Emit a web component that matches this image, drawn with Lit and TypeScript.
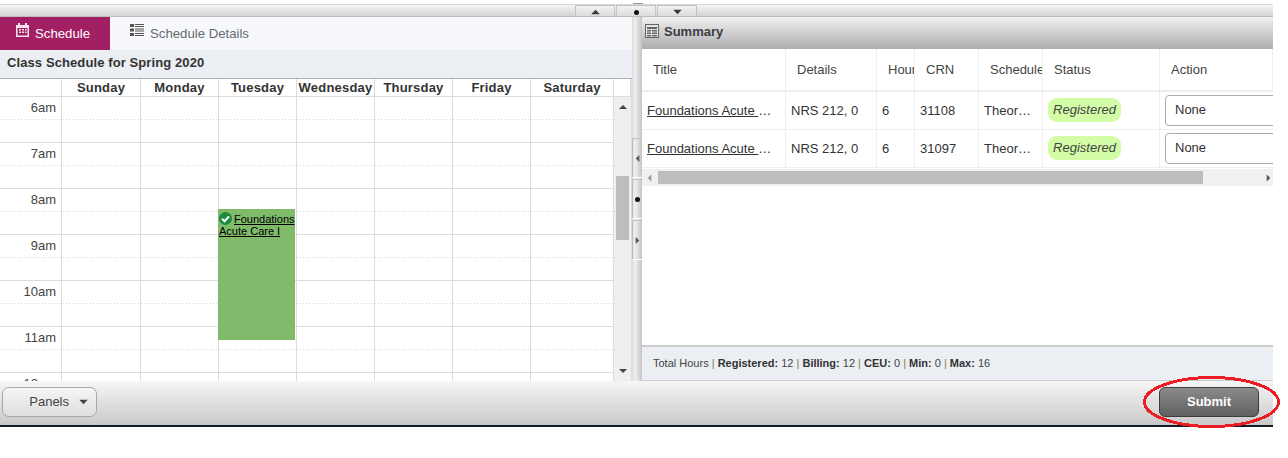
import { LitElement, html, css } from "lit";
import { customElement } from "lit/decorators.js";

const DAYS = ["Sunday", "Monday", "Tuesday", "Wednesday", "Thursday", "Friday", "Saturday"];
const HOURS = ["6am", "7am", "8am", "9am", "10am", "11am", "12pm"];
const ROWS = [
  { crn: "31108" },
  { crn: "31097" },
];

const tri = (dir: string) => {
  const pts: Record<string, string> = {
    up: "0,6 10,6 5,1",
    down: "0,1 10,1 5,6",
    left: "6,0 6,10 1,5",
    right: "1,0 1,10 6,5",
  };
  const vb = dir === "up" || dir === "down" ? "0 0 10 7" : "0 0 7 10";
  const w = dir === "up" || dir === "down" ? 10 : 7;
  const h = dir === "up" || dir === "down" ? 7 : 10;
  return html`<svg width=${w} height=${h} viewBox=${vb}><polygon points=${pts[dir]} fill="currentColor"></polygon></svg>`;
};

@customElement("app-root")
export class AppRoot extends LitElement {
  static styles = css`
    :host { display: block; width: 1288px; height: 458px; position: relative; overflow: hidden; background: #fff;
      font-family: "Liberation Sans", Arial, sans-serif; color: #333; }
    * { box-sizing: border-box; }
    .app { width: 1273px; height: 427px; padding-top: 4px; display: flex; flex-direction: column; }
    .topbar { height: 13px; flex: none; border-top: 1px solid #d6d6d6; border-bottom: 1px solid #bdbdbd;
      background: linear-gradient(#f4f4f4, #d4d4d4); display: flex; gap: 1px; padding-left: 575px; }
    .tbtn { width: 40px; height: 11px; border: 1px solid #c4c4c4; border-bottom: 0;
      display: flex; align-items: flex-end; justify-content: center; color: #3a3a3a; padding-bottom: 1px; background: linear-gradient(#f2f2f2, #dcdcdc); position: relative; }
    .tbtn svg { display: block; width: 9px; height: 6px; }
    .tbtn.mid::before { content: ""; position: absolute; left: 16px; top: -3px; width: 10px; height: 1px; background: #8c9ab0; }
    .dot { width: 5px; height: 5px; border-radius: 50%; background: #111; }
    .main { flex: 1; display: flex; min-height: 0; }
    .left { width: 632px; flex: none; display: flex; flex-direction: column; min-height: 0; }
    .tabs { height: 33px; flex: none; display: flex; background: #f7f8fb; }
    .tab { display: flex; align-items: center; font-size: 13.2px; color: #666a72; }
    .tab.on { width: 110px; background: #a31f63; color: #fff; padding-left: 16px; }
    .tab.off { padding-left: 20px; }
    .tab.on svg { margin: -7px 6px 0 0; }
    .tab.off svg { margin: -7px 6px 0 0; }
    .ctitle { height: 29px; flex: none; background: #ebeef3; border-bottom: 1px solid #b0b0b0; font-size: 13px; font-weight: 700; letter-spacing: .1px;
      color: #333; padding: 5px 0 0 7px; }
    .cal { flex: 1; display: flex; min-height: 0; }
    .gridwrap { width: 613px; flex: none; display: flex; flex-direction: column; min-height: 0; }
    .dayhead { display: grid; grid-template-columns: var(--cols); height: 18px; flex: none; border-bottom: 1px solid #dcdcdc; }
    .dh { font-size: 13px; font-weight: 700; letter-spacing: .2px; text-align: center; border-left: 1px solid #dcdcdc; color: #333; line-height: 18px; white-space: nowrap; }
    .dh.first { border-left: 0; }
    .body { position: relative; flex: 1; min-height: 0; overflow: hidden; }
    .row { display: grid; grid-template-columns: var(--cols); height: 46px; border-bottom: 1px solid #dcdcdc;
      background-image: linear-gradient(to right, #d4d4d4 1px, transparent 1px); background-size: 3px 1px; background-repeat: repeat-x; background-position: 0 22px; }
    .cell { border-left: 1px solid #dcdcdc; }
    .time { font-size: 13px; text-align: right; padding: 3px 5px 0 0; color: #444; border-left: 0; }
    .event { position: absolute; left: 218px; top: 112px; width: 77px; height: 131px; background: #80ba6b; color: #111; font-size: 11px; line-height: 12px; padding: 4px 0 0 1px; }
    .event a { color: #000; text-decoration: underline; }
    .event svg { vertical-align: -2px; margin: -1px 2px 0 0; }
    .sb { width: 19px; flex: none; background: #efefef; border-left: 1px solid #dcdcdc; border-right: 1px solid #dcdcdc; display: flex; flex-direction: column; align-items: center; position: relative; color: #444; }
    .sb .cap { height: 18px; width: 100%; flex: none; margin-bottom: 7px; border-bottom: 1px solid #dcdcdc; border-right: 1px solid #dcdcdc; background: #fff; }
    .sb .thumb { position: absolute; left: 2px; top: 97px; width: 13px; height: 64px; background: #bdbdbd; }
    .sb svg { display: block; width: 8px; height: 6px; }
    .sb .d { margin-top: auto; margin-bottom: 7px; }
    .split { width: 10px; flex: none; background: linear-gradient(to right, #dcdcdc, #f0f0f0 30%, #c4c4c4); display: flex; flex-direction: column; padding-top: 121px; }
    .sbtn { height: 40px; width: 10px; flex: none; border-left: 1px solid #bbb; border-top: 1px solid #c4c4c4; border-bottom: 1px solid #fff; display: flex; align-items: center; color: #555; margin-bottom: 1px; padding-left: 2px; }
    .sbtn svg { width: 5px; height: 9px; }
    .sdot { width: 5px; height: 5px; border-radius: 50%; background: #111; }
    .right { flex: 1; min-width: 0; display: flex; flex-direction: column; }
    .shead { height: 32px; flex: none; background: linear-gradient(#f0f0f0, #adadb0); display: flex; align-items: center; padding: 0 0 4px 3px; gap: 5px; font-size: 13px; font-weight: 700; color: #3c3c44; }
    .tablewrap { flex: 1; min-height: 0; overflow: hidden; }
    .tgrid { display: grid; grid-template-columns: 144px 91px 38px 64px 64px 117px 113px; }
    .th, .td { border-right: 1px solid #eee; overflow: hidden; white-space: nowrap; color: #333; font-size: 13px; }
    .th { height: 43px; border-bottom: 2px solid #eee; padding: 13px 0 0 11px; color: #444; }
    .td { height: 38px; border-bottom: 1px solid #eee; padding: 11px 0 0 5px; }
    .th:last-child, .td.last { border-right: 0; }
    .uline { text-decoration: underline; white-space: pre; }
    .td.status { padding: 6px 0 0 5px; }
    .pill { display: block; width: 73px; height: 24px; background: #d2fda6; border-radius: 9px; font-style: italic; line-height: 23px; text-align: center; color: #444; }
    .td.act { padding: 3px 0 0 5px; }
    .sel { width: 120px; height: 31px; border: 1px solid #aaa; border-radius: 4px; padding: 6px 0 0 9px; background: #fff; }
    .hsb { height: 17px; background: #f0f0f0; position: relative; color: #999; display: flex; align-items: center; padding: 0 2px 0 5px; justify-content: space-between; margin-top: 1px; }
    .hsb svg { display: block; width: 5px; height: 8px; }
    .hsb .th2 { position: absolute; left: 16px; top: 2px; width: 545px; height: 13px; background: #bdbdbd; }
    .hsb .rt { color: #555; }
    .sfoot { height: 36px; flex: none; background: #ebeef3; border-top: 2px solid #ccc; border-bottom: 1px solid #ccc; font-size: 11px; padding: 10px 0 0 11px; color: #444; }
    .sfoot b { color: #333; }
    .sfoot i { font-style: normal; color: #8a7a4a; }
    .bottom { height: 46px; flex: none; background: linear-gradient(#f6f6f6, #c9c9c9); border-bottom: 2px solid #121c26; display: flex; align-items: center; justify-content: space-between; padding: 0 14px 3px 2px; }
    .panels { width: 95px; height: 30px; border: 1px solid #a8a8a8; border-radius: 7px; display: flex; align-items: center; justify-content: flex-end; gap: 10px; padding-right: 8px; font-size: 13px; color: #444; background: linear-gradient(#f6f6f6, #dedede); }
    .panels svg { width: 9px; height: 6px; }
    .submit { width: 100px; height: 30px; border: 1px solid #3c3c3c; border-radius: 6px; background: linear-gradient(#8a8a8a, #606060); color: #fff; font-size: 13px; font-weight: 700; display: flex; align-items: center; justify-content: center; }
    .ring { position: absolute; left: 1143px; top: 376px; width: 138px; height: 53px; pointer-events: none; }
  `;

  render() {
    return html`
      <div class="app">
        <div class="topbar">
          <div class="tbtn">${tri("up")}</div>
          <div class="tbtn mid"><span class="dot"></span></div>
          <div class="tbtn">${tri("down")}</div>
        </div>
        <div class="main">
          <div class="left" style="--cols: 61px 79px 78px 78px 78px 78px 78px 83px">
            <div class="tabs">
              <div class="tab on">
                <svg width="13" height="14" viewBox="0 0 13 14" fill="#f3e4ec"><path d="M2 0h2v2h5V0h2v2h2v12H0V2h2zM1.500 5v7.500h10V5z"></path><path d="M3 6h2v1.500H3zM6 6h2v1.500H6zM9 6h1.500v1.500H9zM3 8.500h2V10H3zM6 8.500h2V10H6zM9 8.500h1.500V10H9z"></path></svg>
                Schedule
              </div>
              <div class="tab off">
                <svg width="14" height="13" viewBox="0 0 14 13" fill="#555"><path d="M0 0h4v3H0zM0 4.500h4v3H0zM0 9h4v3H0z"></path><path d="M5 0h9v1H5zM5 2h9v1H5zM5 4.500h9v1H5zM5 6.500h9v1H5zM5 9h9v1H5zM5 11h9v1H5z"></path></svg>
                Schedule Details
              </div>
            </div>
            <div class="ctitle">Class Schedule for Spring 2020</div>
            <div class="cal">
              <div class="gridwrap">
                <div class="dayhead">
                  <div class="dh first"></div>
                  ${DAYS.map((d) => html`<div class="dh">${d}</div>`)}
                </div>
                <div class="body">
                  ${HOURS.map(
                    (h) => html`<div class="row">
                      <div class="cell time">${h}</div>
                      ${DAYS.map(() => html`<div class="cell"></div>`)}
                    </div>`
                  )}
                  <div class="event">
                    <svg width="13" height="13" viewBox="0 0 13 13"><circle cx="6.500" cy="6.500" r="6.500" fill="#1f8a3e"></circle><path d="M3 6.800l2.500 2.500L10 4.500" fill="none" stroke="#fff" stroke-width="2"></path></svg><a>Foundations Acute Care I</a>
                  </div>
                </div>
              </div>
              <div class="sb">
                <div class="cap"></div>
                <span>${tri("up")}</span>
                <div class="thumb"></div>
                <span class="d">${tri("down")}</span>
              </div>
            </div>
          </div>
          <div class="split">
            <div class="sbtn">${tri("left")}</div>
            <div class="sbtn"><span class="sdot"></span></div>
            <div class="sbtn">${tri("right")}</div>
          </div>
          <div class="right">
            <div class="shead">
              <svg width="14" height="14" viewBox="0 0 14 14"><rect x=".5" y=".5" width="13" height="13" fill="#e4e4e4" stroke="#666"></rect><path d="M2 3h10v2H2zM2 6h4v1.500H2zM2 8.500h4V10H2zM2 11h4v1.500H2zM7 6h5v1.500H7zM7 8.500h5V10H7zM7 11h5v1.500H7z" fill="#666"></path></svg>
              Summary
            </div>
            <div class="tablewrap">
              <div class="tgrid">
                ${["Title", "Details", "Hours", "CRN", "Schedule Type", "Status", "Action"].map(
                  (t) => html`<div class="th">${t}</div>`
                )}
                ${ROWS.map(
                  (r) => html`
                    <div class="td"><span class="uline">Foundations Acute </span>…</div>
                    <div class="td">NRS 212, 0</div>
                    <div class="td">6</div>
                    <div class="td">${r.crn}</div>
                    <div class="td">Theor…</div>
                    <div class="td status"><span class="pill">Registered</span></div>
                    <div class="td act last"><div class="sel">None</div></div>
                  `
                )}
              </div>
              <div class="hsb">
                ${tri("left")}
                <div class="th2"></div>
                <span class="rt">${tri("right")}</span>
              </div>
            </div>
            <div class="sfoot">
              Total Hours <i>|</i> <b>Registered:</b> 12 <i>|</i> <b>Billing:</b> 12 <i>|</i> <b>CEU:</b> 0 <i>|</i> <b>Min:</b> 0 <i>|</i> <b>Max:</b> 16
            </div>
          </div>
        </div>
        <div class="bottom">
          <div class="panels">Panels ${tri("down")}</div>
          <div class="submit">Submit</div>
        </div>
      </div>
      <svg class="ring" viewBox="0 0 138 53" shape-rendering="crispEdges"><ellipse cx="68.500" cy="26" rx="67" ry="24.500" fill="none" stroke="#ed1c24" stroke-width="3"></ellipse></svg>
    `;
  }
}
